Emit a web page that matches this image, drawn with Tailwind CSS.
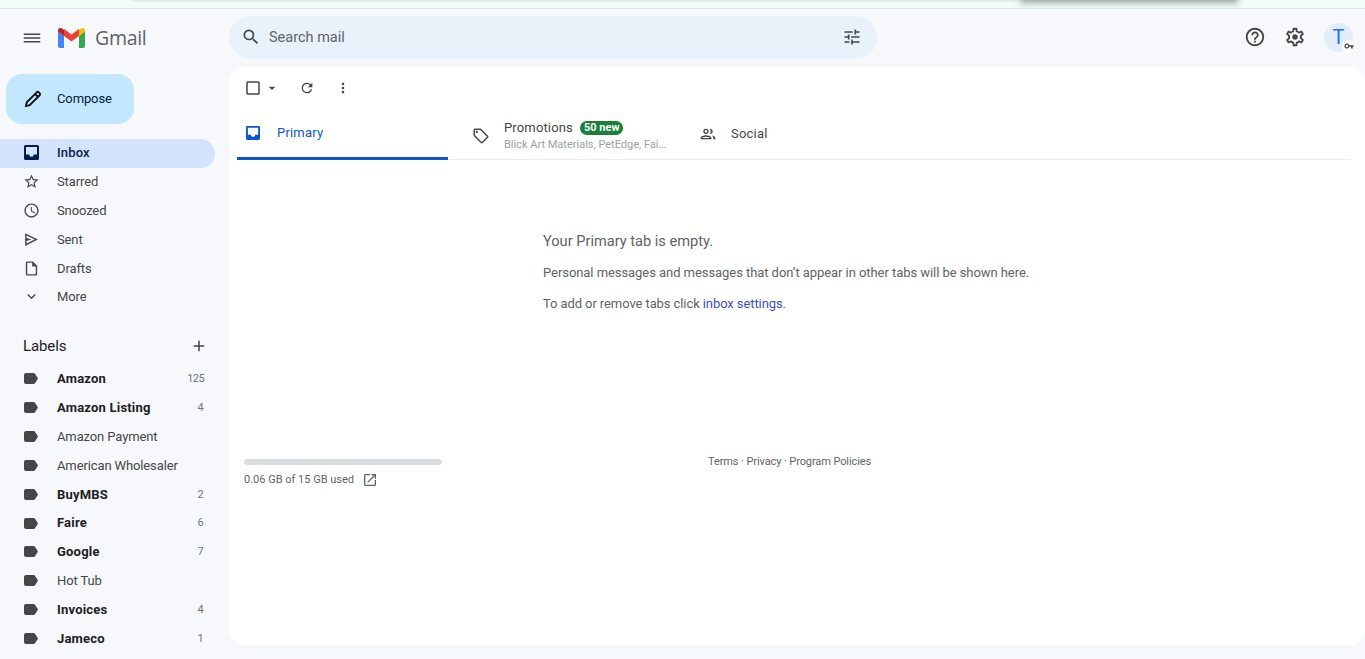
<!DOCTYPE html>
<html lang="en">
<head>
  <meta charset="UTF-8" />
  <title>Gmail</title>
  <script src="https://cdn.jsdelivr.net/npm/@tailwindcss/browser@4"></script>
</head>
<body class="h-[659px] w-[1365px] overflow-hidden bg-[#f6f8fc] font-['Roboto',sans-serif] text-[13px] text-[#444746]">

  <!-- strip of the window above -->
  <div class="relative h-[9px] overflow-hidden border-b border-[#d5ebe1] bg-[#f2fbf7]">
    <div class="absolute left-[130px] top-[-6px] h-[8px] w-[890px] rounded-b-md bg-[#dcefe8]"></div>
    <div class="absolute left-[1024px] top-[-9px] h-[8px] w-[210px] bg-[#5f6b67] shadow-[0_0_6px_4px_rgba(95,107,103,0.6)]"></div>
  </div>

  <div class="flex h-[650px]">
    <!-- sidebar -->
    <aside class="flex w-[229px] shrink-0 flex-col tracking-[-0.12px]">
      <div class="flex h-[58px] items-center pl-[23px]">
        <svg class="h-[18px] w-[18px]" viewBox="0 0 24 24" fill="#444746"><path d="M1 18h22v-2H1v2zm0-5h22v-2H1v2zm0-7v2h22V6H1z"/></svg>
        <svg class="ml-[17px] h-[20px] w-[27px]" viewBox="0 0 27 20">
          <path fill="#4285f4" d="M0 3v15a2 2 0 0 0 2 2h4V8z"/>
          <path fill="#34a853" d="M21 8v12h4a2 2 0 0 0 2-2V3z"/>
          <path fill="#ea4335" d="M6 8V1l7.500 5.500L21 1v7l-7.500 5.500z"/>
          <path fill="#c5221f" d="M0 3.500V2.500C0 .500 2.500-.700 4 .400L6 1.800V8z"/>
          <path fill="#fbbc04" d="M27 3.500V2.500C27 .500 24.500-.700 23 .400L21 1.800V8z"/>
        </svg>
        <span class="ml-[10px] font-['Open_Sans',sans-serif] text-[19.5px] leading-none tracking-[-0.3px] text-[#5f6368]">Gmail</span>
      </div>

      <div class="pl-[6px] pt-[7px]">
        <button class="flex h-[50px] w-[128px] items-center rounded-2xl bg-[#c2e7ff] pl-[17px] text-[#001d35]">
          <svg class="h-[20px] w-[20px]" viewBox="0 0 24 24" fill="none" stroke="#111" stroke-width="2.200"><path d="M3.500 20.500l1-4.500L16.500 4a1.800 1.800 0 0 1 2.500 0l1 1a1.800 1.800 0 0 1 0 2.500L8 19.500z"/><path d="M14.500 6l3.500 3.500"/></svg>
          <span class="ml-[14px]">Compose</span>
        </button>
      </div>

      <nav class="mt-[15px] w-[215px]">
        <a class="flex h-[29px] items-center rounded-r-full bg-[#d3e3fd] pb-[2px] pl-[24px] font-medium tracking-[0.15px] text-[#041e49]">
          <svg class="h-[15px] w-[15px]" viewBox="0 0 15 15"><path fill="#041e49" fill-rule="evenodd" d="M1.500 0h12A1.500 1.500 0 0 1 15 1.500v12a1.500 1.500 0 0 1-1.500 1.500h-12A1.500 1.500 0 0 1 0 13.500v-12A1.500 1.500 0 0 1 1.500 0zM2 2v7.500h3.200a2.300 2.300 0 0 0 4.600 0H13V2z"/></svg>
          <span class="ml-[18px]">Inbox</span>
        </a>
        <a class="flex h-[29px] items-center pb-[2px] pl-[23px]">
          <svg class="h-[17px] w-[17px]" viewBox="0 0 24 24" fill="#444746"><path d="M22 9.240l-7.190-.62L12 2 9.190 8.630 2 9.240l5.460 4.730L5.820 21 12 17.270 18.180 21l-1.630-7.030L22 9.240zM12 15.400l-3.760 2.270 1-4.280-3.320-2.880 4.380-.38L12 6.100l1.710 4.040 4.380.38-3.320 2.880 1 4.280L12 15.400z"/></svg>
          <span class="ml-[17px]">Starred</span>
        </a>
        <a class="flex h-[29px] items-center pb-[2px] pl-[23px]">
          <svg class="h-[17px] w-[17px]" viewBox="0 0 24 24" fill="#444746"><path d="M11.990 2C6.470 2 2 6.480 2 12s4.470 10 9.990 10C17.520 22 22 17.520 22 12S17.520 2 11.990 2zM12 20c-4.420 0-8-3.580-8-8s3.580-8 8-8 8 3.580 8 8-3.580 8-8 8zm.5-13H11v6l5.250 3.150.75-1.230-4.500-2.670z"/></svg>
          <span class="ml-[17px]">Snoozed</span>
        </a>
        <a class="flex h-[29px] items-center pb-[2px] pl-[23px]">
          <svg class="h-[17px] w-[17px]" viewBox="0 0 24 24" fill="#444746"><path d="M3 3v18l18-9L3 3zm2 3.240L16.530 12 5 17.760v-3.740l7-2.020-7-2.020V6.240z"/></svg>
          <span class="ml-[17px]">Sent</span>
        </a>
        <a class="flex h-[29px] items-center pb-[2px] pl-[23px]">
          <svg class="h-[17px] w-[17px]" viewBox="0 0 24 24" fill="#444746"><path d="M14 2H6c-1.100 0-2 .900-2 2v16c0 1.100.900 2 2 2h12c1.100 0 2-.900 2-2V8l-6-6zm4 18H6V4h7v5h5v11z"/></svg>
          <span class="ml-[17px]">Drafts</span>
        </a>
        <a class="flex h-[27px] items-center pb-[2px] pl-[23px]">
          <svg class="h-[17px] w-[17px]" viewBox="0 0 24 24" fill="#444746"><path d="M7.410 8.590L12 13.170l4.590-4.580L18 10l-6 6-6-6z"/></svg>
          <span class="ml-[17px]">More</span>
        </a>
      </nav>

      <div class="mt-[21px] flex h-[28px] w-[215px] items-center justify-between pl-[23px] pr-[7px]">
        <span class="text-[15px] text-[#1f1f1f]">Labels</span>
        <svg class="h-[18px] w-[18px]" viewBox="0 0 24 24" fill="#444746"><path d="M19 13h-6v6h-2v-6H5v-2h6V5h2v6h6v2z"/></svg>
      </div>

      <ul class="mt-[4px] w-[215px]">
        <li class="flex h-[29px] items-center pl-[24px] pr-[11px] font-bold tracking-[0.2px] text-[#202124]">
          <svg class="h-[11px] w-[14px] shrink-0" viewBox="0 0 14 11" fill="#444746"><path d="M2 0h7.500a2 2 0 0 1 1.500.700L14 5.500 11 10.300a2 2 0 0 1-1.500.700H2a2 2 0 0 1-2-2V2a2 2 0 0 1 2-2z"/></svg>
          <span class="ml-[19px] flex-1">Amazon</span><span class="mt-[1px] text-[11px] font-normal tracking-[-0.6px] text-[#70757a]">125</span>
        </li>
        <li class="flex h-[29px] items-center pl-[24px] pr-[11px] font-bold tracking-[0.2px] text-[#202124]">
          <svg class="h-[11px] w-[14px] shrink-0" viewBox="0 0 14 11" fill="#444746"><path d="M2 0h7.500a2 2 0 0 1 1.500.700L14 5.500 11 10.300a2 2 0 0 1-1.500.700H2a2 2 0 0 1-2-2V2a2 2 0 0 1 2-2z"/></svg>
          <span class="ml-[19px] flex-1">Amazon Listing</span><span class="mt-[1px] text-[11px] font-normal text-[#70757a]">4</span>
        </li>
        <li class="flex h-[29px] items-center pl-[24px] pr-[11px]">
          <svg class="h-[11px] w-[14px] shrink-0" viewBox="0 0 14 11" fill="#444746"><path d="M2 0h7.500a2 2 0 0 1 1.500.700L14 5.500 11 10.300a2 2 0 0 1-1.500.700H2a2 2 0 0 1-2-2V2a2 2 0 0 1 2-2z"/></svg>
          <span class="ml-[19px] flex-1">Amazon Payment</span>
        </li>
        <li class="flex h-[29px] items-center pl-[24px] pr-[11px]">
          <svg class="h-[11px] w-[14px] shrink-0" viewBox="0 0 14 11" fill="#444746"><path d="M2 0h7.500a2 2 0 0 1 1.500.700L14 5.500 11 10.300a2 2 0 0 1-1.500.700H2a2 2 0 0 1-2-2V2a2 2 0 0 1 2-2z"/></svg>
          <span class="ml-[19px] flex-1">American Wholesaler</span>
        </li>
        <li class="flex h-[29px] items-center pl-[24px] pr-[11px] font-bold tracking-[0.2px] text-[#202124]">
          <svg class="h-[11px] w-[14px] shrink-0" viewBox="0 0 14 11" fill="#444746"><path d="M2 0h7.500a2 2 0 0 1 1.500.700L14 5.500 11 10.300a2 2 0 0 1-1.500.700H2a2 2 0 0 1-2-2V2a2 2 0 0 1 2-2z"/></svg>
          <span class="ml-[19px] flex-1">BuyMBS</span><span class="mt-[1px] text-[11px] font-normal text-[#70757a]">2</span>
        </li>
        <li class="flex h-[28px] items-center pl-[24px] pr-[11px] font-bold tracking-[0.2px] text-[#202124]">
          <svg class="h-[11px] w-[14px] shrink-0" viewBox="0 0 14 11" fill="#444746"><path d="M2 0h7.500a2 2 0 0 1 1.500.700L14 5.500 11 10.300a2 2 0 0 1-1.500.700H2a2 2 0 0 1-2-2V2a2 2 0 0 1 2-2z"/></svg>
          <span class="ml-[19px] flex-1">Faire</span><span class="mt-[1px] text-[11px] font-normal text-[#70757a]">6</span>
        </li>
        <li class="flex h-[29px] items-center pl-[24px] pr-[11px] font-bold tracking-[0.2px] text-[#202124]">
          <svg class="h-[11px] w-[14px] shrink-0" viewBox="0 0 14 11" fill="#444746"><path d="M2 0h7.500a2 2 0 0 1 1.500.700L14 5.500 11 10.300a2 2 0 0 1-1.500.700H2a2 2 0 0 1-2-2V2a2 2 0 0 1 2-2z"/></svg>
          <span class="ml-[19px] flex-1">Google</span><span class="mt-[1px] text-[11px] font-normal text-[#70757a]">7</span>
        </li>
        <li class="flex h-[29px] items-center pl-[24px] pr-[11px]">
          <svg class="h-[11px] w-[14px] shrink-0" viewBox="0 0 14 11" fill="#444746"><path d="M2 0h7.500a2 2 0 0 1 1.500.700L14 5.500 11 10.300a2 2 0 0 1-1.500.700H2a2 2 0 0 1-2-2V2a2 2 0 0 1 2-2z"/></svg>
          <span class="ml-[19px] flex-1">Hot Tub</span>
        </li>
        <li class="flex h-[29px] items-center pl-[24px] pr-[11px] font-bold tracking-[0.2px] text-[#202124]">
          <svg class="h-[11px] w-[14px] shrink-0" viewBox="0 0 14 11" fill="#444746"><path d="M2 0h7.500a2 2 0 0 1 1.500.700L14 5.500 11 10.300a2 2 0 0 1-1.500.700H2a2 2 0 0 1-2-2V2a2 2 0 0 1 2-2z"/></svg>
          <span class="ml-[19px] flex-1">Invoices</span><span class="mt-[1px] text-[11px] font-normal text-[#70757a]">4</span>
        </li>
        <li class="flex h-[29px] items-center pl-[24px] pr-[11px] font-bold tracking-[0.2px] text-[#202124]">
          <svg class="h-[11px] w-[14px] shrink-0" viewBox="0 0 14 11" fill="#444746"><path d="M2 0h7.500a2 2 0 0 1 1.500.700L14 5.500 11 10.300a2 2 0 0 1-1.500.700H2a2 2 0 0 1-2-2V2a2 2 0 0 1 2-2z"/></svg>
          <span class="ml-[19px] flex-1">Jameco</span><span class="mt-[1px] text-[11px] font-normal text-[#70757a]">1</span>
        </li>
      </ul>
    </aside>

    <div class="flex min-w-0 flex-1 flex-col">
      <!-- top bar -->
      <header class="flex h-[58px] items-center pb-[2px]">
        <div class="flex h-[43px] w-[648px] items-center rounded-full bg-[#e9f1fb] pl-[12px] pr-[15px]">
          <svg class="h-[20px] w-[20px]" viewBox="0 0 24 24" fill="#444746"><path d="M15.500 14h-.790l-.280-.270A6.470 6.470 0 0 0 16 9.500 6.500 6.500 0 1 0 9.500 16c1.610 0 3.090-.590 4.230-1.570l.270.280v.790l5 4.990L20.490 19l-4.990-5zm-6 0C7.010 14 5 11.990 5 9.500S7.010 5 9.500 5 14 7.010 14 9.500 11.990 14 9.500 14z"/></svg>
          <span class="ml-[8px] mt-[2px] flex-1 text-[14.5px] text-[#5f6368]">Search mail</span>
          <svg class="h-[20px] w-[20px]" viewBox="0 0 24 24" fill="#444746"><path d="M3 17v2h6v-2H3zM3 5v2h10V5H3zm10 16v-2h8v-2h-8v-2h-2v6h2zM7 9v2H3v2h4v2h2V9H7zm14 4v-2H11v2h10zm-6-4h2V7h4V5h-4V3h-2v6z"/></svg>
        </div>
        <div class="ml-auto flex items-center pr-[12px]">
          <svg class="h-[22px] w-[22px]" viewBox="0 0 24 24" fill="#444746"><path d="M11 18h2v-2h-2v2zm1-16C6.480 2 2 6.480 2 12s4.480 10 10 10 10-4.480 10-10S17.520 2 12 2zm0 18c-4.410 0-8-3.590-8-8s3.590-8 8-8 8 3.590 8 8-3.590 8-8 8zm0-14c-2.210 0-4 1.790-4 4h2c0-1.100.900-2 2-2s2 .900 2 2c0 2-3 1.750-3 5h2c0-2.250 3-2.500 3-5 0-2.210-1.790-4-4-4z"/></svg>
          <svg class="ml-[18px] h-[22px] w-[22px]" viewBox="0 0 24 24" fill="#444746"><path d="M19.430 12.980c.040-.320.070-.640.070-.980 0-.340-.030-.660-.070-.980l2.110-1.650c.190-.150.240-.420.120-.640l-2-3.460c-.090-.160-.260-.250-.440-.250-.060 0-.120.010-.170.030l-2.490 1c-.520-.400-1.080-.730-1.690-.980l-.380-2.650C14.460 2.180 14.250 2 14 2h-4c-.250 0-.460.180-.490.420l-.380 2.650c-.610.250-1.170.590-1.690.980l-2.490-1c-.060-.020-.120-.030-.180-.030-.170 0-.340.090-.430.250l-2 3.460c-.130.220-.070.490.120.640l2.110 1.650c-.040.320-.070.650-.070.980 0 .330.030.660.070.980l-2.110 1.650c-.190.150-.240.420-.120.640l2 3.460c.090.160.260.250.440.250.060 0 .120-.010.170-.030l2.490-1c.520.400 1.080.730 1.690.980l.380 2.650c.030.240.240.420.490.420h4c.250 0 .460-.180.490-.420l.380-2.650c.610-.250 1.170-.590 1.690-.980l2.490 1c.060.020.120.030.180.030.170 0 .340-.090.430-.250l2-3.460c.120-.220.070-.490-.120-.640l-2.110-1.650zm-1.980-1.710c.040.310.050.520.050.730 0 .210-.020.430-.050.730l-.140 1.130.890.700 1.080.840-.700 1.210-1.270-.510-1.040-.420-.900.680c-.430.320-.840.560-1.250.730l-1.060.430-.160 1.130-.200 1.350h-1.400l-.190-1.350-.160-1.130-1.060-.43c-.430-.180-.830-.410-1.230-.710l-.910-.700-1.060.430-1.270.510-.700-1.210 1.080-.84.890-.700-.140-1.130c-.030-.310-.050-.540-.050-.740s.020-.430.050-.730l.140-1.130-.890-.700-1.080-.84.700-1.210 1.270.510 1.040.420.900-.680c.430-.320.840-.560 1.250-.730l1.060-.43.160-1.130.200-1.350h1.390l.190 1.350.160 1.130 1.060.43c.430.180.830.410 1.230.710l.910.700 1.060-.43 1.270-.510.700 1.210-1.070.85-.89.700.140 1.130zM12 9a3 3 0 1 0 0 6 3 3 0 0 0 0-6z"/></svg>
          <div class="relative ml-[18px] flex h-[29px] w-[29px] items-center justify-center rounded-full bg-[#e3ecfb] text-[20px] text-[#1a73e8]">
            T
            <span class="absolute bottom-[-1px] right-[-2px] flex h-[13px] w-[13px] items-center justify-center rounded-full bg-white">
              <svg class="h-[10px] w-[10px]" viewBox="0 0 24 24" fill="#444746"><path d="M12.650 10A6 6 0 1 0 12.650 14H17v4h4v-4h2v-4zM7 15a3 3 0 1 1 0-6 3 3 0 0 1 0 6z"/></svg>
            </span>
          </div>
        </div>
      </header>

      <!-- mail panel -->
      <main class="mb-[14px] flex-1 rounded-2xl bg-white">
        <div class="flex h-[42px] items-center pl-[15px]">
          <svg class="h-[18px] w-[18px]" viewBox="0 0 24 24" fill="#444746"><path d="M19 5v14H5V5h14m0-2H5a2 2 0 0 0-2 2v14a2 2 0 0 0 2 2h14a2 2 0 0 0 2-2V5a2 2 0 0 0-2-2z"/></svg>
          <svg class="ml-[2px] h-[16px] w-[16px]" viewBox="0 0 24 24" fill="#444746"><path d="M7 10l5 5 5-5z"/></svg>
          <svg class="ml-[19px] h-[16px] w-[16px]" viewBox="0 0 24 24" fill="#444746"><path d="M17.650 6.350A7.960 7.960 0 0 0 12 4a8 8 0 1 0 7.730 10h-2.080A6 6 0 1 1 12 6c1.660 0 3.140.690 4.220 1.780L13 11h7V4l-2.350 2.350z"/></svg>
          <svg class="ml-[20px] h-[16px] w-[16px]" viewBox="0 0 24 24" fill="#444746"><path d="M12 8a2 2 0 1 0 0-4 2 2 0 0 0 0 4zm0 2a2 2 0 1 0 0 4 2 2 0 0 0 0-4zm0 6a2 2 0 1 0 0 4 2 2 0 0 0 0-4z"/></svg>
        </div>

        <div class="ml-[8px] mr-[14px] flex h-[51px] border-b border-[#eceff1]">
          <div class="flex h-[51px] w-[211px] items-center border-b-[3px] border-[#0b57d0] pl-[9px] tracking-[0.2px] text-[#0b57d0]">
            <svg class="h-[14px] w-[14px]" viewBox="0 0 15 15"><path fill="#0b57d0" fill-rule="evenodd" d="M1.500 0h12A1.500 1.500 0 0 1 15 1.500v12a1.500 1.500 0 0 1-1.500 1.500h-12A1.500 1.500 0 0 1 0 13.500v-12A1.500 1.500 0 0 1 1.500 0zM2 2v7.500h3.200a2.300 2.300 0 0 0 4.600 0H13V2z"/></svg>
            <span class="ml-[17px]">Primary</span>
          </div>
          <div class="flex h-[50px] w-[243px] items-center pl-[24px] pt-[4px]">
            <svg class="h-[18px] w-[18px]" viewBox="0 0 24 24" fill="#444746"><path d="M21.410 11.580l-9-9C12.050 2.220 11.550 2 11 2H4c-1.100 0-2 .900-2 2v7c0 .550.220 1.050.590 1.420l9 9c.360.360.860.580 1.410.580.550 0 1.050-.220 1.410-.590l7-7c.370-.360.590-.860.590-1.410 0-.550-.230-1.060-.590-1.420zM13 20.010L4 11V4h7v-.010l9 9-7 7.020zM6.500 5A1.500 1.500 0 1 0 6.500 8a1.500 1.500 0 0 0 0-3z"/></svg>
            <div class="ml-[14px]">
              <div class="flex items-center leading-[16px]">
                <span class="tracking-[0.15px] text-[#444746]">Promotions</span>
                <span class="ml-[7px] flex h-[14px] items-center rounded-full bg-[#188038] px-[4px] text-[11px] font-bold text-white">50 new</span>
              </div>
              <div class="mt-[2px] w-[163px] truncate text-[11px] leading-[14px] text-[#9aa0a6]">Blick Art Materials, PetEdge, Faire</div>
            </div>
          </div>
          <div class="flex h-[50px] items-center pb-[1px] pl-[9px]">
            <svg class="h-[16px] w-[16px]" viewBox="0 0 24 24" fill="#444746"><path d="M9 12a4 4 0 1 0 0-8 4 4 0 0 0 0 8zm0-6a2 2 0 1 1 0 4 2 2 0 0 1 0-4zm0 8c-2.670 0-8 1.340-8 4v2h16v-2c0-2.660-5.330-4-8-4zm-6 4c.220-.720 3.310-2 6-2s5.800 1.290 6 2H3zm13-6.100A4 4 0 0 0 16 4.100c-.500 0-.900.100-1.300.200a6 6 0 0 1 0 7.400c.400.100.800.200 1.300.200zm1.500 2.300c1.400.900 2.500 2 2.500 3.800v2h3v-2c0-2.300-3.100-3.500-5.500-3.800z"/></svg>
            <span class="ml-[15px] tracking-[0.2px] text-[#444746]">Social</span>
          </div>
        </div>

        <section class="ml-[314px] mt-[71px] h-[228px] text-[#5f6368]">
          <h2 class="text-[14.600px] leading-[20px]">Your Primary tab is empty.</h2>
          <p class="mt-[12px] leading-[20px] tracking-[-0.06px]">Personal messages and messages that don’t appear in other tabs will be shown here.</p>
          <p class="mt-[11px] leading-[20px] tracking-[-0.09px]">To add or remove tabs click <a class="text-[#3b4fc4]">inbox settings</a>.</p>
        </section>

        <footer class="relative flex h-[40px] px-[15px] text-[11px] text-[#5f6368]">
          <div class="w-[198px]">
            <div class="h-[6px] rounded-full bg-[#dadce0]"></div>
            <div class="mt-[7px] flex items-center">
              <span>0.06 GB of 15 GB used</span>
              <svg class="ml-[8px] h-[16px] w-[16px]" viewBox="0 0 24 24" fill="#5f6368"><path d="M19 19H5V5h7V3H5a2 2 0 0 0-2 2v14a2 2 0 0 0 2 2h14c1.100 0 2-.900 2-2v-7h-2v7zM14 3v2h3.590l-9.830 9.830 1.410 1.410L19 6.410V10h2V3h-7z"/></svg>
            </div>
          </div>
          <div class="ml-[266px] mt-[-4px] leading-[14px] tracking-[-0.1px]">Terms · Privacy · Program Policies</div>
        </footer>
      </main>
    </div>
  </div>
</body>
</html>
